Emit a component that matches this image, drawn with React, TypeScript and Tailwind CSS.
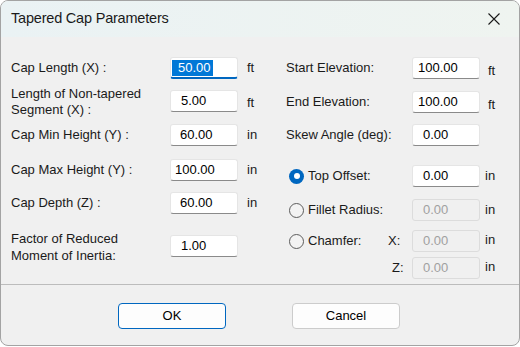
import React from 'react';

type FieldProps = { value: string; pad: number; focused?: boolean; disabled?: boolean };

const Field: React.FC<FieldProps> = ({ value, pad, focused, disabled }) => {
  if (disabled) {
    return (
      <div className="w-[68px] h-[22px] shrink-0 rounded-[3px] border border-[#dcdcdc] bg-[#f0f0f0] flex items-center text-[#a0a0a0]">
        <span style={{ paddingLeft: pad - 1 }}>{value}</span>
      </div>
    );
  }
  if (focused) {
    return (
      <div className="w-[68px] h-[22px] shrink-0 rounded-[3px] border border-[#e5e5e5] border-b-2 border-b-[#0067c0] bg-white flex items-center">
        <span className="ml-[1px] bg-[#0078d7] text-white pl-[6px] pr-[2px] leading-[16px]">{value}</span>
      </div>
    );
  }
  return (
    <div className="w-[68px] h-[22px] shrink-0 rounded-[3px] border border-[#e5e5e5] border-b-[#8a8a8a] bg-white flex items-center text-black">
      <span style={{ paddingLeft: pad - 1 }}>{value}</span>
    </div>
  );
};

const Radio: React.FC<{ checked?: boolean }> = ({ checked }) =>
  checked ? (
    <span className="w-[15px] h-[15px] rounded-full bg-[#0067c0] flex items-center justify-center shrink-0">
      <span className="w-[6px] h-[6px] rounded-full bg-white" />
    </span>
  ) : (
    <span className="w-[15px] h-[15px] rounded-full border border-[#5c5c5c] bg-[#f3f3f3] shrink-0" />
  );

const App: React.FC = () => {
  return (
    <div className="w-[520px] h-[347px] bg-white font-['Liberation_Sans',Arial,sans-serif] text-[13px] text-[#1a1a1a]">
      <div className="w-[520px] h-[346px] border border-[#a3a3a3] rounded-[8px] overflow-hidden bg-[#f0f0f0] flex flex-col">
        {/* title bar */}
        <div className="h-[36px] shrink-0 bg-gradient-to-r from-[#eaf2f4] to-[#eff4f0] flex items-center justify-between pl-[10px] pr-[19px]">
          <span className="text-[14.5px] text-[#1a1a1a] tracking-[-0.2px]">Tapered Cap Parameters</span>
          <svg width="12" height="12" viewBox="0 0 12 12">
            <path d="M0.5 0.5 L11.5 11.5 M11.5 0.5 L0.5 11.5" stroke="#1a1a1a" strokeWidth="1.1" />
          </svg>
        </div>

        {/* body */}
        <div className="h-[247px] shrink-0 flex pl-[10px] pt-[20px]">
          {/* left column */}
          <div className="w-[275px] flex flex-col">
            <div className="h-[22px] flex items-center">
              <span className="w-[159px]">Cap Length (X) :</span>
              <Field value="50.00" pad={8} focused />
              <span className="ml-[9px]">ft</span>
            </div>
            <div className="h-[22px] mt-[11px] flex items-center">
              <span className="w-[159px] leading-[16px] mt-[2px]">Length of Non-tapered<br />Segment (X) :</span>
              <Field value="5.00" pad={11} />
              <span className="ml-[9px] mt-[3px]">ft</span>
            </div>
            <div className="h-[22px] mt-[12px] flex items-center">
              <span className="w-[159px]">Cap Min Height (Y) :</span>
              <Field value="60.00" pad={10} />
              <span className="ml-[9px]">in</span>
            </div>
            <div className="h-[22px] mt-[13px] flex items-center">
              <span className="w-[159px]">Cap Max Height (Y) :</span>
              <Field value="100.00" pad={5} />
              <span className="ml-[9px]">in</span>
            </div>
            <div className="h-[22px] mt-[11px] flex items-center">
              <span className="w-[159px]">Cap Depth (Z) :</span>
              <Field value="60.00" pad={10} />
              <span className="ml-[9px]">in</span>
            </div>
            <div className="h-[22px] mt-[21px] flex items-center">
              <span className="w-[159px] leading-[17px] mt-[2px]">Factor of Reduced<br />Moment of Inertia:</span>
              <Field value="1.00" pad={11} />
            </div>
          </div>

          {/* right column */}
          <div className="flex flex-col">
            <div className="h-[22px] flex items-center">
              <span className="w-[126px]">Start Elevation:</span>
              <Field value="100.00" pad={6} />
              <span className="ml-[8px] mt-[5px]">ft</span>
            </div>
            <div className="h-[22px] mt-[12px] flex items-center">
              <span className="w-[126px]">End Elevation:</span>
              <Field value="100.00" pad={6} />
              <span className="ml-[8px] mt-[5px]">ft</span>
            </div>
            <div className="h-[22px] mt-[11px] flex items-center">
              <span className="w-[126px]">Skew Angle (deg):</span>
              <Field value="0.00" pad={11} />
            </div>
            <div className="h-[22px] mt-[19px] flex items-center">
              <span className="w-[126px] flex items-center gap-[4px] pl-[3px]">
                <Radio checked />
                <span>Top Offset:</span>
              </span>
              <Field value="0.00" pad={11} />
              <span className="ml-[5px]">in</span>
            </div>
            <div className="h-[22px] mt-[12px] flex items-center">
              <span className="w-[126px] flex items-center gap-[4px] pl-[3px]">
                <Radio />
                <span>Fillet Radius:</span>
              </span>
              <Field value="0.00" pad={11} disabled />
              <span className="ml-[5px]">in</span>
            </div>
            <div className="h-[22px] mt-[9px] flex items-center">
              <span className="w-[126px] flex items-center gap-[4px] pl-[3px]">
                <Radio />
                <span className="w-[76px]">Chamfer:</span>
                <span>X:</span>
              </span>
              <Field value="0.00" pad={11} disabled />
              <span className="ml-[5px] -mt-[3px]">in</span>
            </div>
            <div className="h-[22px] mt-[5px] flex items-center">
              <span className="w-[126px] pl-[106px]">Z:</span>
              <Field value="0.00" pad={11} disabled />
              <span className="ml-[5px] -mt-[3px]">in</span>
            </div>
          </div>
        </div>

        {/* footer */}
        <div className="flex-1 border-t border-[#bcbcbc] flex justify-center gap-[66px] pt-[18px] pr-[2px]">
          <button className="w-[108px] h-[26px] rounded-[4px] border border-[#0067c0] bg-[#fdfdfd] text-[13px] text-black">OK</button>
          <button className="w-[108px] h-[26px] rounded-[4px] border border-[#cccccc] bg-[#fdfdfd] text-[13px] text-black">Cancel</button>
        </div>
      </div>
    </div>
  );
};

export default App;
